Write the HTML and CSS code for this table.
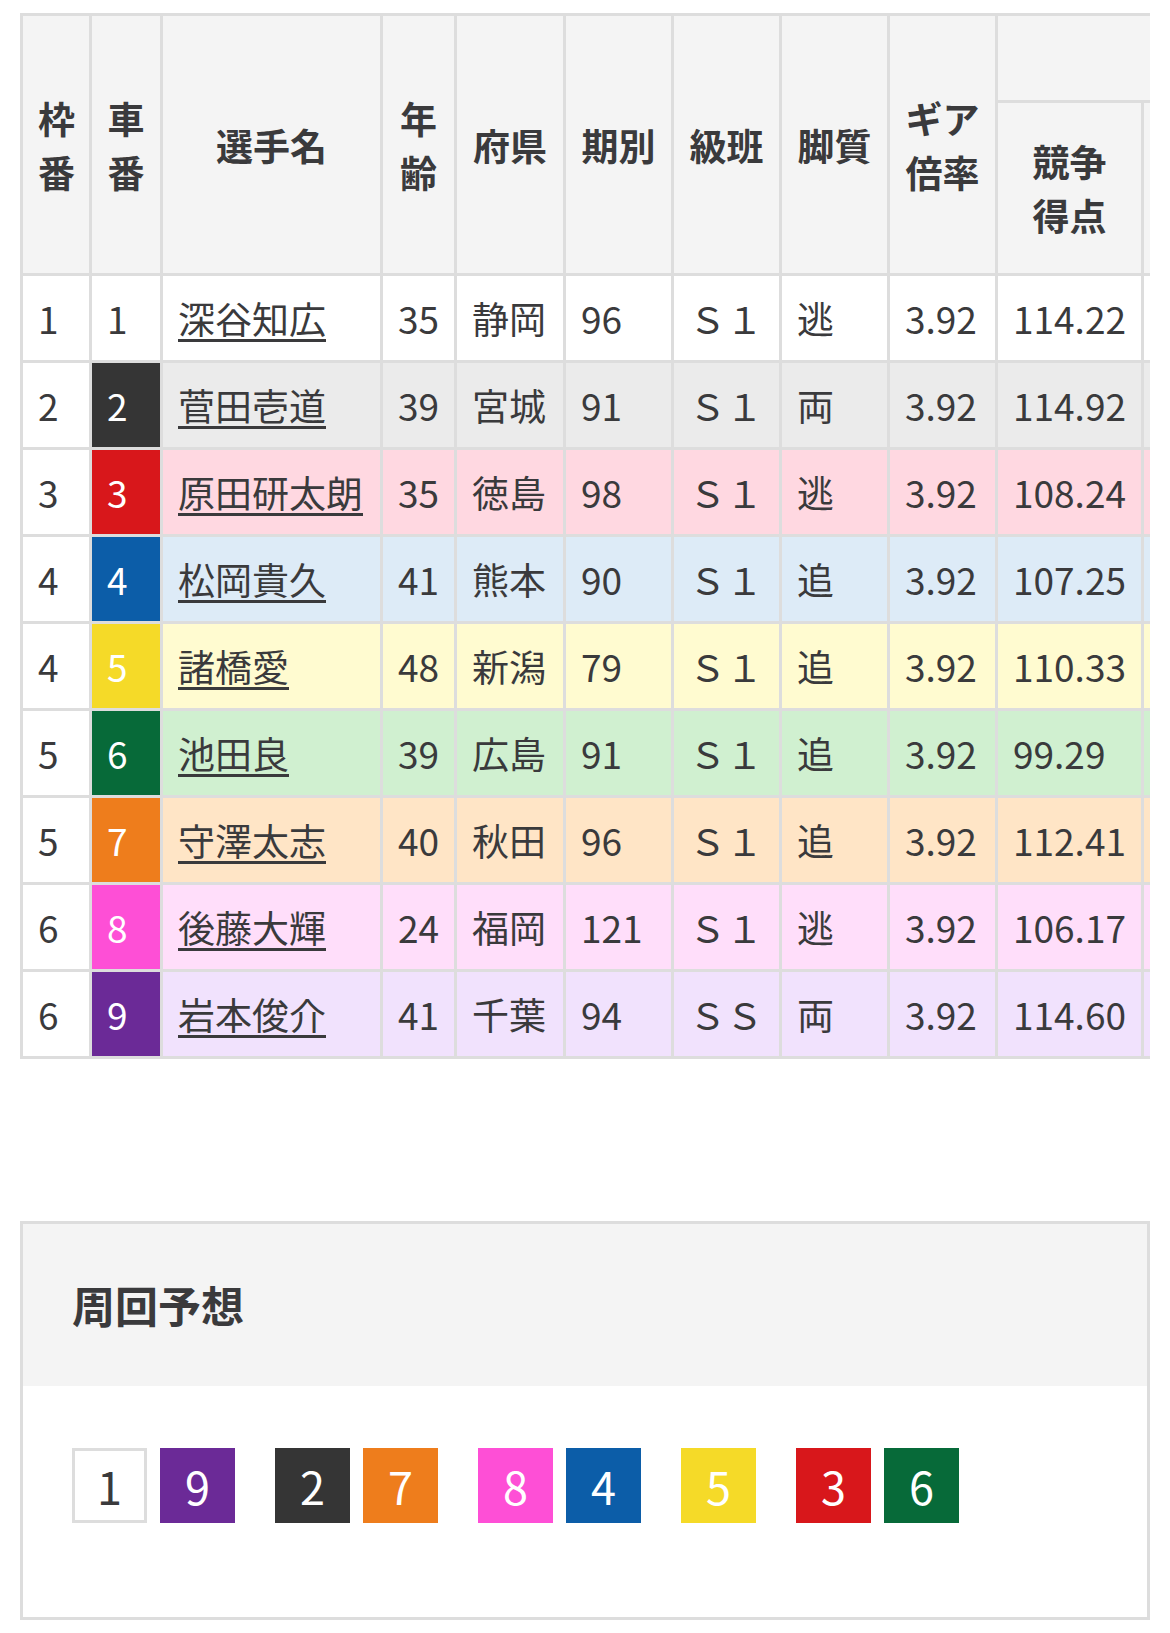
FILE: index.html
```html
<!DOCTYPE html>
<html lang="ja">
<head>
<meta charset="utf-8">
<title>出走表</title>
<link rel="stylesheet" href="styles.css">
</head>
<body>
<div class="page">
  <div class="table-wrap">
    <table class="entry">
      <colgroup>
        <col class="w-waku"><col class="w-sha"><col class="w-name"><col class="w-age"><col class="w-pref"><col class="w-ki"><col class="w-kyu"><col class="w-kyaku"><col class="w-gear"><col class="w-score"><col class="w-extra"><col class="w-extra">
      </colgroup>
      <thead>
        <tr class="hrow1">
          <th rowspan="2">枠<br>番</th>
          <th rowspan="2">車<br>番</th>
          <th rowspan="2">選手名</th>
          <th rowspan="2">年<br>齢</th>
          <th rowspan="2">府県</th>
          <th rowspan="2">期別</th>
          <th rowspan="2">級班</th>
          <th rowspan="2">脚質</th>
          <th rowspan="2">ギア<br>倍率</th>
          <th colspan="3" class="th-group">&nbsp;</th>
        </tr>
        <tr class="hrow2">
          <th class="score-h">競争<br>得点</th>
          <th>&nbsp;</th>
          <th>&nbsp;</th>
        </tr>
      </thead>
      <tbody>
        <tr class="r1"><td class="waku">1</td><td class="sha">1</td><td><a href="#">深谷知広</a></td><td>35</td><td>静岡</td><td>96</td><td>Ｓ１</td><td>逃</td><td>3.92</td><td>114.22</td><td></td><td></td></tr>
        <tr class="r2"><td class="waku">2</td><td class="sha">2</td><td><a href="#">菅田壱道</a></td><td>39</td><td>宮城</td><td>91</td><td>Ｓ１</td><td>両</td><td>3.92</td><td>114.92</td><td></td><td></td></tr>
        <tr class="r3"><td class="waku">3</td><td class="sha">3</td><td><a href="#">原田研太朗</a></td><td>35</td><td>徳島</td><td>98</td><td>Ｓ１</td><td>逃</td><td>3.92</td><td>108.24</td><td></td><td></td></tr>
        <tr class="r4"><td class="waku">4</td><td class="sha">4</td><td><a href="#">松岡貴久</a></td><td>41</td><td>熊本</td><td>90</td><td>Ｓ１</td><td>追</td><td>3.92</td><td>107.25</td><td></td><td></td></tr>
        <tr class="r5"><td class="waku">4</td><td class="sha">5</td><td><a href="#">諸橋愛</a></td><td>48</td><td>新潟</td><td>79</td><td>Ｓ１</td><td>追</td><td>3.92</td><td>110.33</td><td></td><td></td></tr>
        <tr class="r6"><td class="waku">5</td><td class="sha">6</td><td><a href="#">池田良</a></td><td>39</td><td>広島</td><td>91</td><td>Ｓ１</td><td>追</td><td>3.92</td><td>99.29</td><td></td><td></td></tr>
        <tr class="r7"><td class="waku">5</td><td class="sha">7</td><td><a href="#">守澤太志</a></td><td>40</td><td>秋田</td><td>96</td><td>Ｓ１</td><td>追</td><td>3.92</td><td>112.41</td><td></td><td></td></tr>
        <tr class="r8"><td class="waku">6</td><td class="sha">8</td><td><a href="#">後藤大輝</a></td><td>24</td><td>福岡</td><td>121</td><td>Ｓ１</td><td>逃</td><td>3.92</td><td>106.17</td><td></td><td></td></tr>
        <tr class="r9"><td class="waku">6</td><td class="sha">9</td><td><a href="#">岩本俊介</a></td><td>41</td><td>千葉</td><td>94</td><td>ＳＳ</td><td>両</td><td>3.92</td><td>114.60</td><td></td><td></td></tr>
      </tbody>
    </table>
  </div>

  <section class="lap">
    <h2 class="lap-title">周回予想</h2>
    <div class="lap-body">
      <div class="lap-line">
        <div class="lap-group"><span class="chip c1">1</span><span class="chip c9">9</span></div>
        <div class="lap-group"><span class="chip c2">2</span><span class="chip c7">7</span></div>
        <div class="lap-group"><span class="chip c8">8</span><span class="chip c4">4</span></div>
        <div class="lap-group"><span class="chip c5">5</span></div>
        <div class="lap-group"><span class="chip c3">3</span><span class="chip c6">6</span></div>
      </div>
    </div>
  </section>
</div>
</body>
</html>
```

FILE: styles.css
```css
* { box-sizing: border-box; }

body {
  margin: 0;
  background: #fff;
  color: #3a3a3c;
  font-family: "Noto Sans CJK JP", "Noto Sans", sans-serif;
}

.page {
  padding: 13px 20px 13px 20px;
}

.table-wrap {
  width: 1130px;
  overflow: hidden;
}

.entry {
  border-collapse: collapse;
  table-layout: fixed;
  width: 1475px;
}

.w-waku { width: 69px; }
.w-sha { width: 71px; }
.w-name { width: 220px; }
.w-age { width: 74px; }
.w-pref { width: 109px; }
.w-ki { width: 108px; }
.w-kyu { width: 108px; }
.w-kyaku { width: 108px; }
.w-gear { width: 108px; }
.w-score { width: 146px; }
.w-extra { width: 177px; }

.entry th,
.entry td {
  border: 3px solid #dddddd;
  padding: 15px;
  font-size: 37px;
  line-height: 54px;
  white-space: nowrap;
  overflow: hidden;
}

.entry th {
  background: #f4f4f4;
  font-weight: 700;
  text-align: center;
  vertical-align: middle;
  color: #3a3a3c;
}

.entry .score-h {
  padding-top: 31px;
  padding-bottom: 31px;
}

.entry td {
  text-align: left;
  font-weight: 400;
}

.entry td a {
  color: inherit;
  text-decoration: underline;
  text-decoration-thickness: 3px;
  text-underline-offset: 5px;
}

.entry td.sha { color: #fff; }

.r1 td { background: #fff; }
.r1 td.sha { background: #fff; color: #3a3a3c; }
.r2 td { background: #ebebeb; }
.r2 td.sha { background: #353535; }
.r3 td { background: #ffd8e1; }
.r3 td.sha { background: #d8171b; }
.r4 td { background: #ddebf7; }
.r4 td.sha { background: #0c5da8; }
.r5 td { background: #fffbd0; }
.r5 td.sha { background: #f5da28; }
.r6 td { background: #d0f0d0; }
.r6 td.sha { background: #076a39; }
.r7 td { background: #ffe5c6; }
.r7 td.sha { background: #ee7d1c; }
.r8 td { background: #ffdefa; }
.r8 td.sha { background: #fe4fd6; }
.r9 td { background: #f1e2fd; }
.r9 td.sha { background: #6b2a97; }
.entry tr td.waku { background: #fff; }

.lap {
  margin-top: 162px;
  border: 3px solid #dddddd;
}

.lap-title {
  margin: 0;
  background: #f4f4f4;
  padding: 48px 49px 50px;
  font-size: 43px;
  line-height: 64px;
  font-weight: 700;
  color: #3a3a3c;
}

.lap-body {
  padding: 62px 49px 94px 49px;
}

.lap-line {
  display: flex;
  gap: 40px;
}

.lap-group {
  display: flex;
  gap: 13px;
}

.chip {
  width: 75px;
  height: 75px;
  display: flex;
  align-items: center;
  justify-content: center;
  font-size: 45px;
  line-height: 1;
  color: #fff;
}

.chip.c1 { background: #fff; border: 3px solid #dddddd; color: #3a3a3c; }
.chip.c2 { background: #353535; }
.chip.c3 { background: #d8171b; }
.chip.c4 { background: #0c5da8; }
.chip.c5 { background: #f5da28; }
.chip.c6 { background: #076a39; }
.chip.c7 { background: #ee7d1c; }
.chip.c8 { background: #fe4fd6; }
.chip.c9 { background: #6b2a97; }
```
